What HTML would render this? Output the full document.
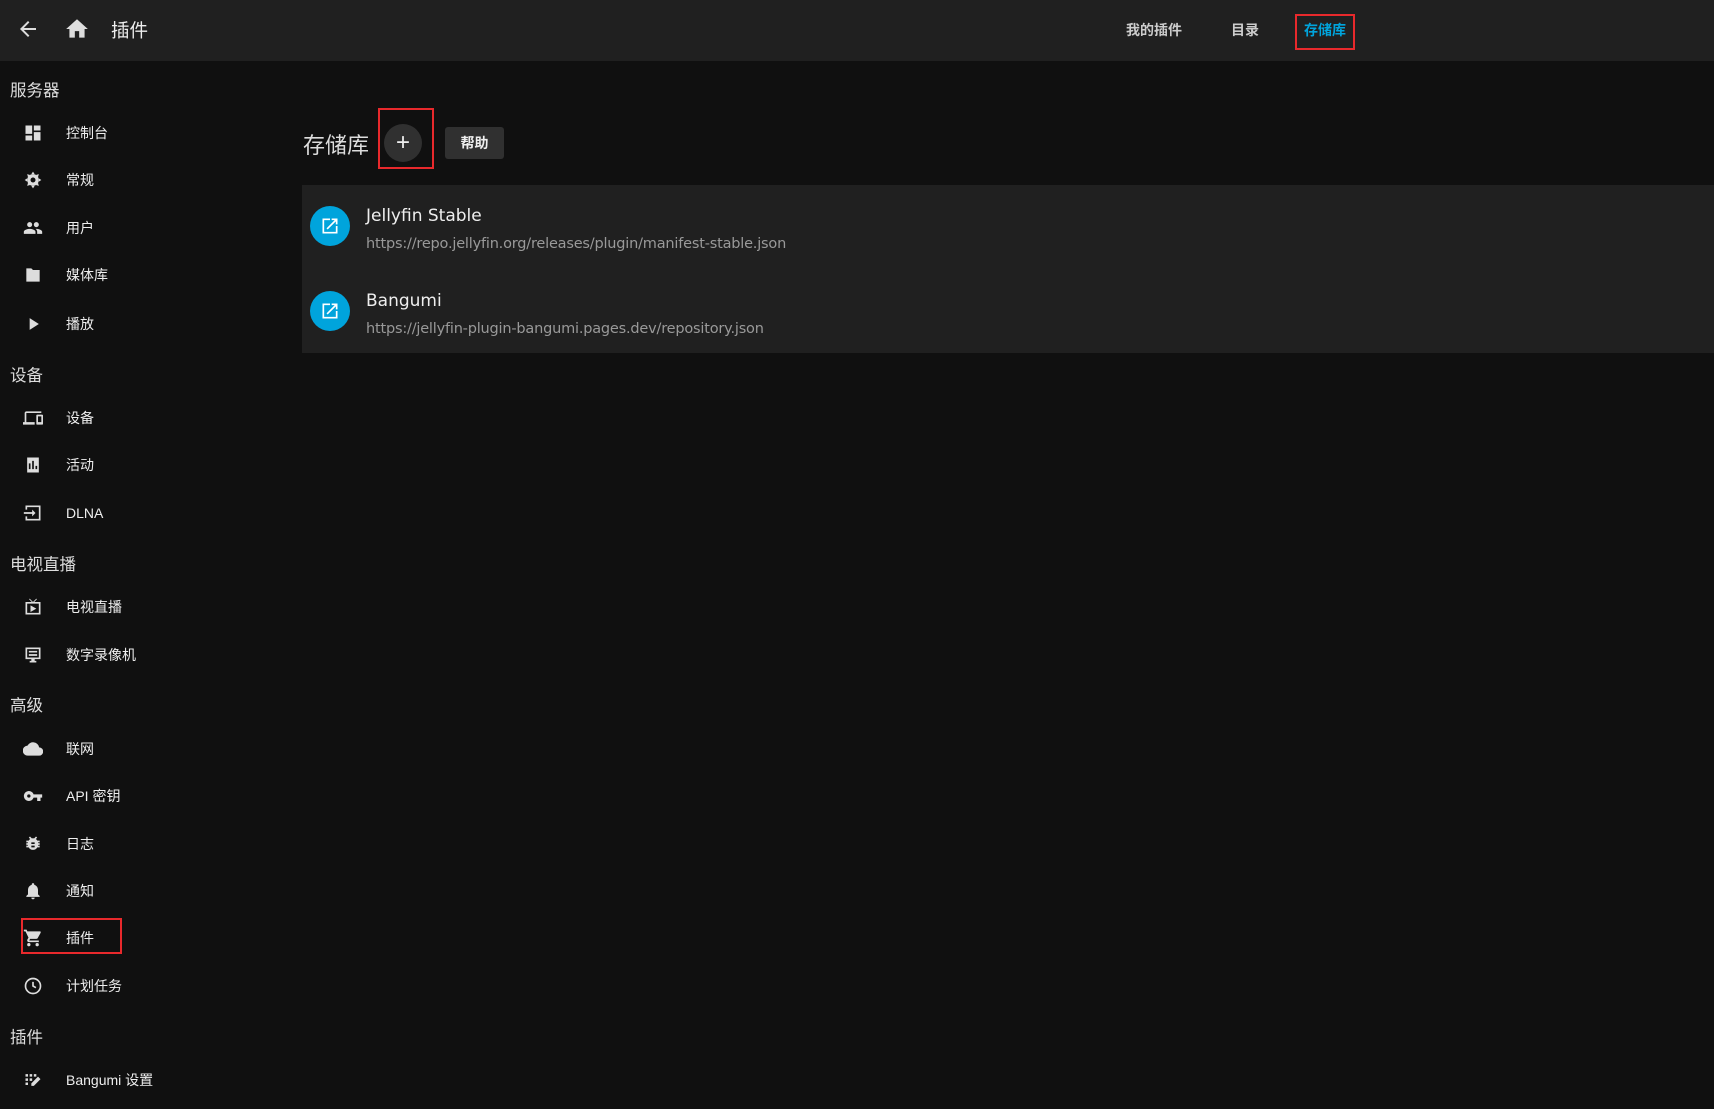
<!DOCTYPE html>
<html><head><meta charset="utf-8"><style>
*{margin:0;padding:0;box-sizing:border-box}
body{width:1714px;height:1109px;background:#101010;font-family:"Liberation Sans","Noto Sans CJK SC",sans-serif;color:#ddd;position:relative;overflow:hidden}
.abs{position:absolute}
.hdr{left:0;top:0;width:1714px;height:61px;background:#202020}
.sec{position:absolute;left:10px;font-size:16.5px;color:#ddd;transform:translateY(-50%)}
.it{position:absolute;left:66px;font-size:14px;color:#eee;transform:translateY(-50%)}
.ic{position:absolute;left:23px;width:20px;height:20px;transform:translateY(-50%)}
.red{position:absolute;border:2px solid #e8292c}
.nav{position:absolute;top:30px;font-size:14px;font-weight:bold;color:#ccc;transform:translateY(-50%)}
.circ{position:absolute;width:40px;height:40px;border-radius:50%;background:#00a4dc;left:310px}
.t{position:absolute;left:366px;font-size:17px;color:#eee;transform:translateY(-50%);font-family:"DejaVu Sans","Liberation Sans",sans-serif}
.u{position:absolute;left:366px;font-size:14.5px;color:#999;transform:translateY(-50%);font-family:"DejaVu Sans","Liberation Sans",sans-serif;letter-spacing:-0.2px}
</style></head><body>
<div class="abs hdr"></div>
<svg class="abs" style="left:16px;top:17px" width="24" height="24" viewBox="0 0 24 24"><path d="M20 11H7.8l5.6-5.6L12 4l-8 8 8 8 1.4-1.4L7.8 13H20z" fill="#ddd"/></svg>
<svg class="abs" style="left:64px;top:16px" width="26" height="26" viewBox="0 0 24 24"><path d="M10 20v-6h4v6h5v-8h3L12 3 2 12h3v8z" fill="#ddd"/></svg>
<div class="abs" style="left:111px;top:17px;font-size:18.5px;color:#eee">插件</div>
<div class="nav" style="left:1126px">我的插件</div>
<div class="nav" style="left:1231px">目录</div>
<div class="nav" style="left:1304px;color:#00a4dc">存储库</div>
<div class="red" style="left:1295px;top:14px;width:60px;height:36px"></div>

<div class="sec" style="top:89px">服务器</div>
<svg class="ic" style="top:133px" viewBox="0 0 24 24"><path d="M3 13h8V3H3zm0 8h8v-6H3zm10 0h8V11h-8zm0-18v6h8V3z" fill="#ddd"/></svg><div class="it" style="top:133px">控制台</div>
<svg class="ic" style="top:180px" viewBox="0 0 24 24"><circle cx="12" cy="12" r="7" fill="#ddd"/><path d="M12 2l2 3h-4zM12 22l2-3h-4zM2 12l3 2v-4zM22 12l-3 2v-4zM5 5l3.5 1-2.5 2.5zM19 19l-3.5-1 2.5-2.5zM19 5l-1 3.5-2.5-2.5zM5 19l1-3.5 2.5 2.5z" fill="#ddd"/><circle cx="12" cy="12" r="3" fill="#101010"/></svg><div class="it" style="top:180px">常规</div>
<svg class="ic" style="top:228px" viewBox="0 0 24 24"><path d="M16 11c1.7 0 3-1.3 3-3s-1.3-3-3-3-3 1.3-3 3 1.3 3 3 3zm-8 0c1.7 0 3-1.3 3-3S9.7 5 8 5 5 6.3 5 8s1.3 3 3 3zm0 2c-2.3 0-7 1.2-7 3.5V19h14v-2.5C15 14.2 10.3 13 8 13zm8 0h-1c1.2.8 2 2 2 3.5V19h6v-2.5c0-2.3-4.7-3.5-7-3.5z" fill="#ddd"/></svg><div class="it" style="top:228px">用户</div>
<svg class="ic" style="top:275px" viewBox="0 0 24 24"><path d="M10 4H4v16h16V6h-8z" fill="#ddd"/></svg><div class="it" style="top:275px">媒体库</div>
<svg class="ic" style="top:324px" viewBox="0 0 24 24"><path d="M8 5v14l11-7z" fill="#ddd"/></svg><div class="it" style="top:324px">播放</div>

<div class="sec" style="top:374px">设备</div>
<svg class="ic" style="top:418px" viewBox="0 0 24 24"><path d="M4 6h18V4H4c-1 0-2 1-2 2v11H0v3h14v-3H4zm19 2h-6c-.5 0-1 .5-1 1v10c0 .5.5 1 1 1h6c.5 0 1-.5 1-1V9c0-.5-.5-1-1-1zm-1 9h-4v-7h4z" fill="#ddd"/></svg><div class="it" style="top:418px">设备</div>
<svg class="ic" style="top:465px" viewBox="0 0 24 24"><path d="M19 3H5v18h14zM9 17H7v-7h2zm4 0h-2V7h2zm4 0h-2v-4h2z" fill="#ddd"/></svg><div class="it" style="top:465px">活动</div>
<svg class="ic" style="top:513px" viewBox="0 0 24 24"><path d="M21 3H3v5h2V5h14v14H5v-3H3v5h18zM11 16l4-4-4-4v3H1v2h10z" fill="#ddd"/></svg><div class="it" style="top:513px">DLNA</div>

<div class="sec" style="top:563px">电视直播</div>
<svg class="ic" style="top:607px" viewBox="0 0 24 24"><path d="M21 6h-7.6l3.3-3.3L16 2l-4 4-4-4-.7.7L10.6 6H3v15h18zm-2 13H5V8h14zM9 10v8l7-4z" fill="#ddd"/></svg><div class="it" style="top:607px">电视直播</div>
<svg class="ic" style="top:655px" viewBox="0 0 24 24"><path d="M21 3H3v14h7v2H8v2h8v-2h-2v-2h7zm-2 12H5V5h14zM7 7h10v2H7zm0 4h10v2H7z" fill="#ddd"/></svg><div class="it" style="top:655px">数字录像机</div>

<div class="sec" style="top:704px">高级</div>
<svg class="ic" style="top:749px" viewBox="0 0 24 24"><path d="M19.4 10A7.5 7.5 0 0 0 5.4 8 6 6 0 0 0 6 20h13a5 5 0 0 0 .4-10z" fill="#ddd"/></svg><div class="it" style="top:749px">联网</div>
<svg class="ic" style="top:796px" viewBox="0 0 24 24"><path d="M12.7 10A6 6 0 1 0 12.7 14H17v4h4v-4h2v-4zM7 14a2 2 0 1 1 0-4 2 2 0 0 1 0 4z" fill="#ddd"/></svg><div class="it" style="top:796px">API 密钥</div>
<svg class="ic" style="top:844px" viewBox="0 0 24 24"><path d="M20 8h-2.8a6 6 0 0 0-1.8-2l1.6-1.6L15.6 3l-2.2 2.2a6 6 0 0 0-2.8 0L8.4 3 7 4.4 8.6 6a6 6 0 0 0-1.8 2H4v2h2v1H4v2h2v1H4v2h2.8a6 6 0 0 0 10.4 0H20v-2h-2v-1h2v-2h-2v-1h2zm-6 8h-4v-2h4zm0-4h-4v-2h4z" fill="#ddd"/></svg><div class="it" style="top:844px">日志</div>
<svg class="ic" style="top:891px" viewBox="0 0 24 24"><path d="M12 22a2 2 0 0 0 2-2h-4a2 2 0 0 0 2 2zm6-6v-5c0-3-1.6-5.6-4.5-6.3V4a1.5 1.5 0 0 0-3 0v.7C7.6 5.4 6 8 6 11v5l-2 2v1h16v-1z" fill="#ddd"/></svg><div class="it" style="top:891px">通知</div>
<svg class="ic" style="top:938px" viewBox="0 0 24 24"><path d="M7 18a2 2 0 1 0 0 4 2 2 0 0 0 0-4zM1 2v2h2l3.6 7.6L5.2 14c-.1.3-.2.6-.2 1 0 1.1.9 2 2 2h12v-2H7.4l1.1-2h7.5c.8 0 1.4-.4 1.700-1l3.6-6.5L21 4H5.2l-.9-2zm16 16a2 2 0 1 0 0 4 2 2 0 0 0 0-4z" fill="#ddd"/></svg><div class="it" style="top:938px">插件</div>
<div class="red" style="left:21px;top:918px;width:101px;height:36px"></div>
<svg class="ic" style="top:986px" viewBox="0 0 24 24"><circle cx="12" cy="12" r="9" fill="none" stroke="#ddd" stroke-width="2"/><path d="M12 7v5l3.5 2" fill="none" stroke="#ddd" stroke-width="2"/></svg><div class="it" style="top:986px">计划任务</div>

<div class="sec" style="top:1036px">插件</div>
<svg class="ic" style="top:1080px" viewBox="0 0 24 24"><path d="M3 5h3v3H3zm5 0h3v3H8zm5 0h3v3h-3zM3 10h3v3H3zm5 0h3v3H8zM3 15h3v3H3zm15-7l3 3-8 8h-3v-3z" fill="#ddd"/></svg><div class="it" style="top:1080px">Bangumi 设置</div>

<div class="abs" style="left:303px;top:128px;font-size:22px;color:#ddd">存储库</div>
<div class="abs" style="left:384px;top:124px;width:38px;height:38px;border-radius:50%;background:#303030;color:#eee;font-size:24px;line-height:38px;text-align:center">+</div>
<div class="red" style="left:378px;top:108px;width:56px;height:61px"></div>
<div class="abs" style="left:445px;top:127px;width:59px;height:32px;background:#303030;border-radius:3px;color:#eee;font-size:14px;font-weight:bold;line-height:32px;text-align:center">帮助</div>

<div class="abs" style="left:302px;top:185px;width:1412px;height:168px;background:#202020"></div>
<div class="circ" style="top:206px"></div>
<svg class="abs" style="left:320px;top:216px" width="20" height="20" viewBox="0 0 24 24"><path d="M19 19H5V5h7V3H3v18h18v-9h-2zM14 3v2h3.6l-9.8 9.8 1.4 1.4L19 6.4V10h2V3z" fill="#fff"/></svg>
<div class="t" style="top:216px">Jellyfin Stable</div>
<div class="u" style="top:244px">https://repo.jellyfin.org/releases/plugin/manifest-stable.json</div>
<div class="circ" style="top:291px"></div>
<svg class="abs" style="left:320px;top:301px" width="20" height="20" viewBox="0 0 24 24"><path d="M19 19H5V5h7V3H3v18h18v-9h-2zM14 3v2h3.6l-9.8 9.8 1.4 1.4L19 6.4V10h2V3z" fill="#fff"/></svg>
<div class="t" style="top:301px">Bangumi</div>
<div class="u" style="top:329px">https://jellyfin-plugin-bangumi.pages.dev/repository.json</div>
</body></html>
